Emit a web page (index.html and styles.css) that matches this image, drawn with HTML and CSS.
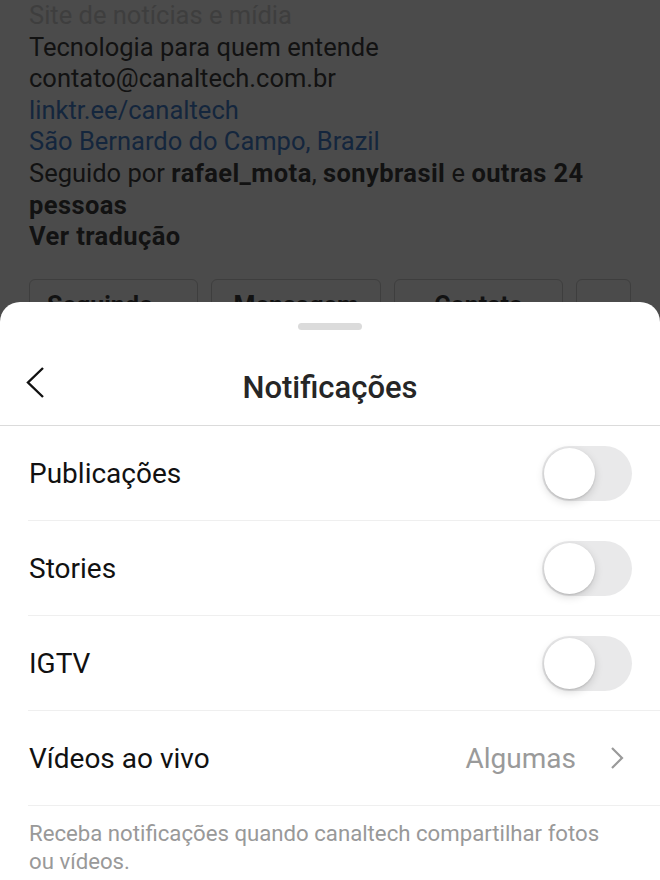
FILE: index.html
```html
<!DOCTYPE html>
<html lang="pt-BR">
<head>
<meta charset="utf-8">
<title>Notificações</title>
<link rel="stylesheet" href="styles.css">
</head>
<body>
<div class="backdrop">
  <div class="bio">
    <div class="muted">Site de notícias e mídia</div>
    <div>Tecnologia para quem entende</div>
    <div>contato@canaltech.com.br</div>
    <div class="link">linktr.ee/canaltech</div>
    <div class="link">São Bernardo do Campo, Brazil</div>
    <div>Seguido por <b>rafael_mota</b>, <b>sonybrasil</b> e <b>outras 24 pessoas</b></div>
    <div><b>Ver tradução</b></div>
  </div>
  <div class="actions">
    <div class="btn">Seguindo ⌄</div>
    <div class="btn">Mensagem</div>
    <div class="btn">Contato</div>
    <div class="btn small">⌄</div>
  </div>
</div>
<div class="sheet">
  <div class="handle"></div>
  <div class="header">
    <svg class="back" width="22" height="34" viewBox="0 0 22 34"><path d="M18 2 L3 16.5 L18 31" fill="none" stroke="#111" stroke-width="2.4"/></svg>
    <div class="title">Notificações</div>
  </div>
  <div class="row">
    <span class="label">Publicações</span>
    <span class="toggle"><span class="knob"></span></span>
  </div>
  <div class="row">
    <span class="label">Stories</span>
    <span class="toggle"><span class="knob"></span></span>
  </div>
  <div class="row">
    <span class="label">IGTV</span>
    <span class="toggle"><span class="knob"></span></span>
  </div>
  <div class="row">
    <span class="label">Vídeos ao vivo</span>
    <span class="value">Algumas</span>
    <svg class="chev" width="14" height="24" viewBox="0 0 14 24"><path d="M2 2 L12 12 L2 22" fill="none" stroke="#9a9a9a" stroke-width="2.2"/></svg>
  </div>
  <p class="note">Receba notificações quando canaltech compartilhar fotos ou vídeos.</p>
</div>
</body>
</html>
```
FILE: styles.css
```css
* { box-sizing: border-box; }
html, body { margin: 0; padding: 0; }
body {
  width: 660px;
  height: 880px;
  overflow: hidden;
  background: #4b4b4b;
  font-family: Roboto, "Liberation Sans", sans-serif;
}
.backdrop {
  height: 302px;
  overflow: hidden;
  padding: 0 29px;
}
.bio {
  font-size: 25.5px;
  line-height: 31.6px;
  color: #121212;
}
.bio b { font-weight: 700; letter-spacing: 0.4px; }
.muted { color: #3e3e3e; }
.link { color: #14263d; }
.actions {
  display: flex;
  gap: 13px;
  margin-top: 26px;
}
.btn {
  width: 170px;
  height: 60px;
  border: 1px solid #3e3e3e;
  border-radius: 6px;
  font-size: 25px;
  font-weight: 700;
  color: #121212;
  text-align: center;
  padding-top: 11px;
}
.btn.small { width: 55px; }
.sheet {
  background: #fff;
  border-radius: 20px 20px 0 0;
  height: 578px;
  display: flex;
  flex-direction: column;
}
.handle {
  width: 64px;
  height: 7px;
  border-radius: 4px;
  background: #dbdbdb;
  margin: 21px auto 0;
}
.header {
  height: 96px;
  padding-top: 19px;
  display: flex;
  align-items: center;
  justify-content: center;
  position: relative;
  border-bottom: 1px solid #dbdbdb;
}
.back { position: absolute; left: 25px; top: 36px; }
.title {
  font-size: 31px;
  font-weight: 500;
  color: #262626;
}
.row {
  margin-left: 28px;
  padding-right: 28px;
  height: 95px;
  border-bottom: 1px solid #efefef;
  display: flex;
  align-items: center;
}
.label {
  flex: 1;
  padding-left: 1px;
  font-size: 28px;
  color: #111;
}
.value {
  font-size: 28px;
  color: #9a9a9a;
  margin-right: 34px;
}
.chev { margin-right: 8px; }
.toggle {
  width: 90px;
  height: 55px;
  border-radius: 28px;
  background: #e9e9ea;
  padding: 2px;
  display: flex;
}
.knob {
  width: 51px;
  height: 51px;
  border-radius: 50%;
  background: #fff;
  box-shadow: 0 3px 8px rgba(0,0,0,0.15), 0 1px 2px rgba(0,0,0,0.12);
}
.note {
  margin: 13px 50px 0 29px;
  font-size: 22.2px;
  line-height: 28px;
  color: #999;
}
```
